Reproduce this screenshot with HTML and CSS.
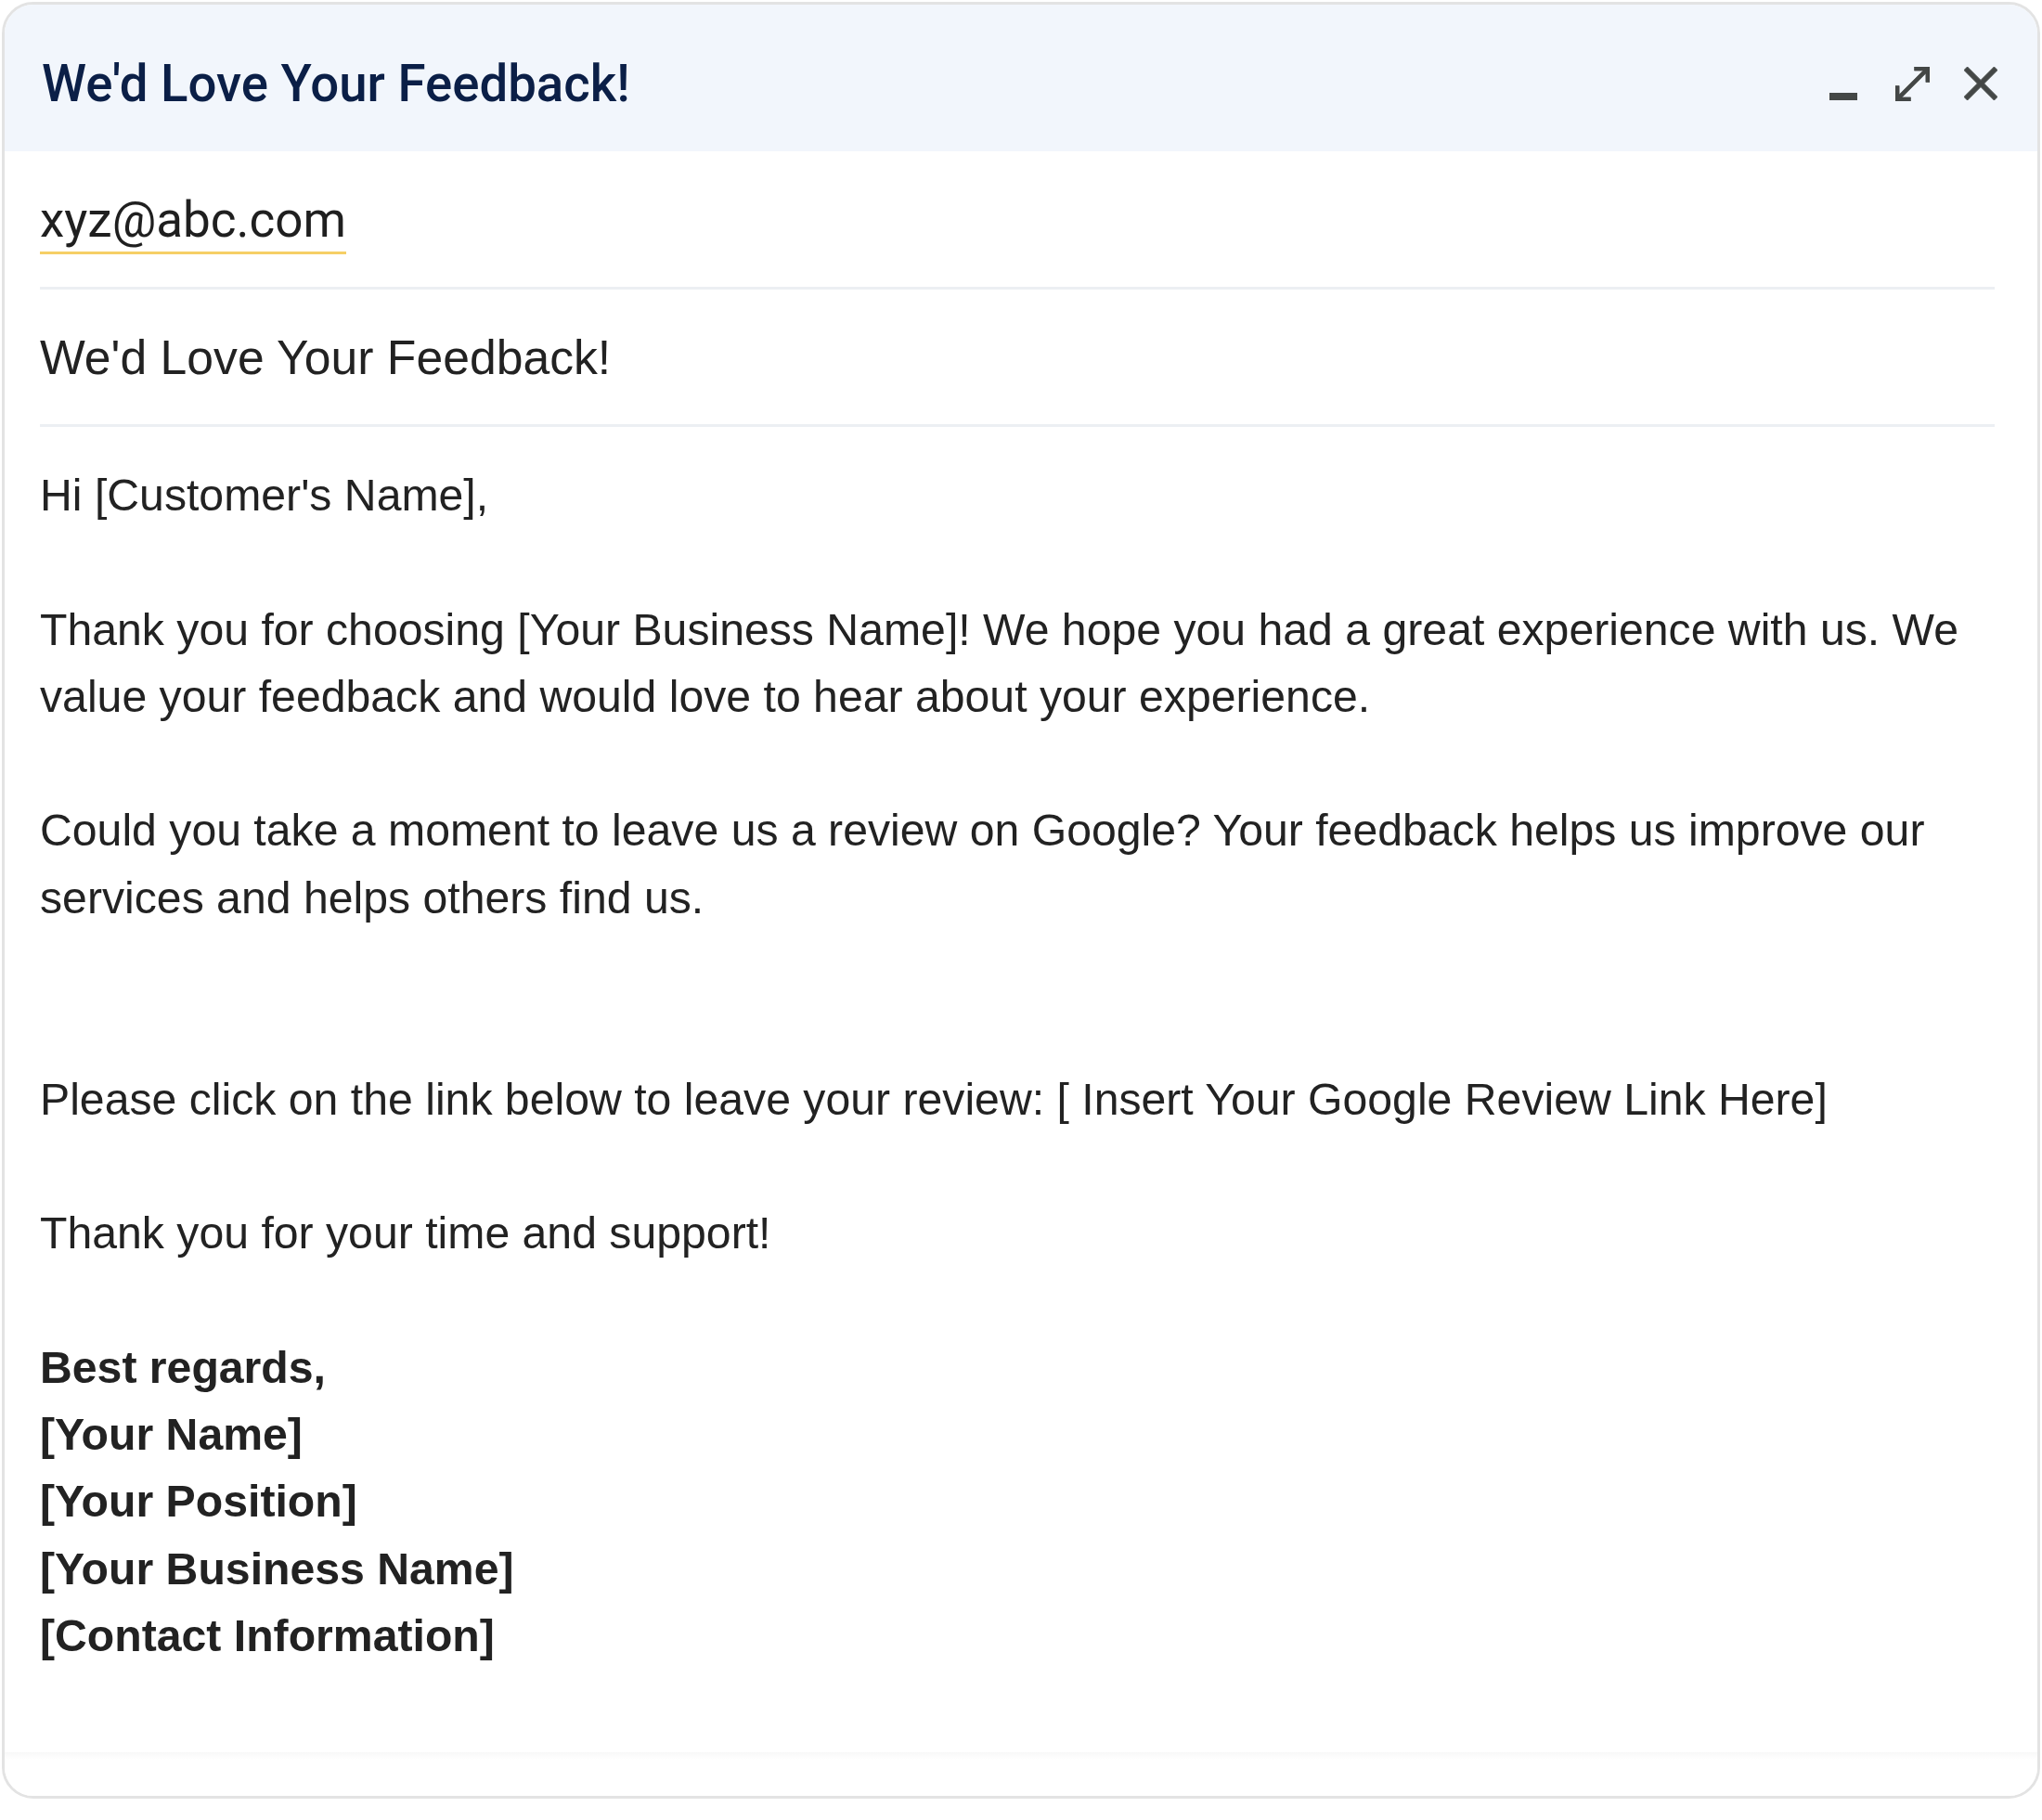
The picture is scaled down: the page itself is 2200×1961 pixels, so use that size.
FILE: index.html
```html
<!DOCTYPE html>
<html lang="en">
<head>
<meta charset="UTF-8">
<meta name="viewport" content="width=device-width, initial-scale=1.0">
<title>We'd Love Your Feedback!</title>
<link rel="stylesheet" href="styles.css">
</head>
<body>

<div class="compose">
    <div class="compose-header">
        <span class="compose-title">We'd Love Your Feedback!</span>
        <div class="header-actions">
            <!-- minimise -->
            <svg class="icon icon-min" viewBox="0 0 30 36"><rect x="0" y="28" width="30" height="8"/></svg>
            <!-- full screen -->
            <svg class="icon icon-expand" viewBox="120 -840 720 720"><path d="M120-120v-320h80v184l504-504H520v-80h320v320h-80v-184L256-200h184v80H120Z"/></svg>
            <!-- close -->
            <svg class="icon icon-close" viewBox="200 -760 560 560"><path d="m256-200-56-56 224-224-224-224 56-56 224 224 224-224 56 56-224 224 224 224-56 56-224-224-224 224Z"/></svg>
        </div>
    </div>

    <div class="field field-to">
        <span class="recipient">xyz@abc.com</span>
    </div>

    <div class="field field-subject">We'd Love Your Feedback!</div>

    <div class="message">
        Hi [Customer's Name],<br>
        <br>
        Thank you for choosing [Your Business Name]! We hope you had a great experience with us. We value your feedback and would love to hear about your experience.<br>
        <br>
        Could you take a moment to leave us a review on Google? Your feedback helps us improve our services and helps others find us.<br>
        <br>
        <br>
        Please click on the link below to leave your review: [ Insert Your Google Review Link Here]<br>
        <br>
        Thank you for your time and support!<br>
        <br>
        <b>Best regards,<br>
        [Your Name]<br>
        [Your Position]<br>
        [Your Business Name]<br>
        [Contact Information]</b>
    </div>

    <div class="compose-footer"></div>
</div>

</body>
</html>
```

FILE: styles.css
```css
body {
    margin: 0;
    background-color: #ffffff;
}

.compose {
    margin: 2px 0 0 2px;
    width: 2196px;
    height: 1936px;
    box-sizing: border-box;
    border: 3px solid #e3e3e3;
    border-radius: 34px;
    overflow: hidden;
    display: flex;
    flex-direction: column;
    background-color: #ffffff;
}

.compose-header {
    height: 158px;
    flex-shrink: 0;
    box-sizing: border-box;
    padding: 12px 43px 0 40px;
    display: flex;
    align-items: center;
    background-color: #f2f6fc;
}

.compose-title {
    flex: 1;
    font: 500 54.6px/1 Roboto, "Liberation Sans", sans-serif;
    color: #0b1f47;
}

.header-actions {
    display: flex;
    align-items: center;
}

.icon {
    display: block;
    fill: #444746;
}

.icon-expand path,
.icon-close path {
    stroke: #444746;
    stroke-width: 14;
    stroke-linejoin: miter;
}

.icon-min {
    width: 30px;
    height: 36px;
}

.icon-expand {
    width: 37px;
    height: 37px;
    margin-left: 41px;
}

.icon-close {
    width: 36px;
    height: 36px;
    margin-left: 37px;
}

.field {
    flex-shrink: 0;
    box-sizing: border-box;
    margin: 0 46px 0 38px;
    border-bottom: 3px solid #eceff3;
}

.field-to {
    height: 149px;
    padding-top: 48px;
}

.recipient {
    display: inline-block;
    font: 400 53px/1 Roboto, "Liberation Sans", sans-serif;
    color: #1f1f1f;
    padding-bottom: 7px;
    border-bottom: 3px solid #f6cf66;
}

.field-subject {
    height: 148px;
    padding-top: 48px;
    font: 51.7px/1 "Liberation Sans", Arial, sans-serif;
    color: #222222;
}

.message {
    flex: 1;
    padding: 37px 46px 0 38px;
    font: 48.2px/72.3px "Liberation Sans", Arial, sans-serif;
    color: #222222;
}

.message b {
    font-weight: bold;
}

.compose-footer {
    height: 47px;
    flex-shrink: 0;
    background: linear-gradient(#f8f8f8, #ffffff 8px);
}
```
